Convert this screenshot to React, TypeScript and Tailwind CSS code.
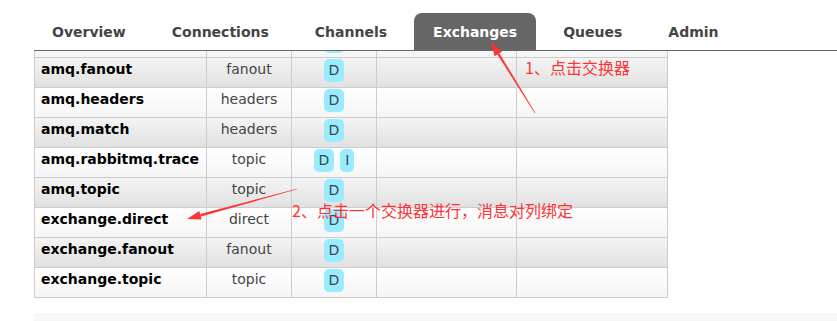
import React from "react";

const tabs = ["Overview", "Connections", "Channels", "Exchanges", "Queues", "Admin"];

const rows = [
  { name: "amq.fanout", type: "fanout", feats: ["D"] },
  { name: "amq.headers", type: "headers", feats: ["D"] },
  { name: "amq.match", type: "headers", feats: ["D"] },
  { name: "amq.rabbitmq.trace", type: "topic", feats: ["D", "I"] },
  { name: "amq.topic", type: "topic", feats: ["D"] },
  { name: "exchange.direct", type: "direct", feats: ["D"] },
  { name: "exchange.fanout", type: "fanout", feats: ["D"] },
  { name: "exchange.topic", type: "topic", feats: ["D"] },
];

function Badge({ label }: { label: string }) {
  return (
    <span className="inline-block h-[23px] px-[5px] pt-[3px] rounded-[5px] bg-[#99ebff] text-[14px] leading-[17px] text-[#444]">
      {label}
    </span>
  );
}

function Row({ name, type, feats, odd }: { name: string; type: string; feats: string[]; odd: boolean }) {
  const bg = odd
    ? "bg-linear-to-b from-[#f4f4f4] to-[#e1e1e1]"
    : "bg-linear-to-b from-white to-[#f5f5f5]";
  return (
    <div className={`grid grid-cols-[172px_85px_85px_140px_151px] h-[30px] border-b border-[#ccc] ${bg}`}>
      <div className="border-r border-[#ccc] pl-[6px] pt-[3px] font-bold text-[14px] leading-[17px] text-black">
        {name}
      </div>
      <div className="border-r border-[#ccc] pt-[3px] text-center text-[14px] leading-[17px] text-[#444]">
        {type}
      </div>
      <div className="border-r border-[#ccc] pt-[1px] flex justify-center items-start gap-[6px]">
        {feats.map((f) => (
          <Badge key={f} label={f} />
        ))}
      </div>
      <div className="border-r border-[#ccc]" />
      <div className="border-r border-[#ccc]" />
    </div>
  );
}

export default function App() {
  return (
    <div className="relative w-[837px] h-[321px] overflow-hidden bg-white font-['DejaVu_Sans',sans-serif]">
      {/* tab bar */}
      <div className="flex items-end gap-[8px] pl-[33px] pt-[13px]">
        {tabs.map((t) => (
          <div
            key={t}
            className={`h-[37px] px-[19px] pt-[2px] flex items-center font-bold text-[14px] ${
              t === "Exchanges" ? "bg-[#666] text-white rounded-t-[8px]" : "text-[#444]"
            }`}
          >
            {t}
          </div>
        ))}
      </div>
      <div className="ml-[34px] border-t border-[#666]" />

      {/* exchanges table */}
      <div className="ml-[34px] w-[634px] border-l border-[#ccc]">
        <div className="h-[7px] overflow-hidden border-b border-[#ccc] flex flex-col justify-end">
          <div className="grid grid-cols-[172px_85px_85px_140px_151px] h-[30px] shrink-0 bg-linear-to-b from-white to-[#f5f5f5]">
            <div className="border-r border-[#ccc]" />
            <div className="border-r border-[#ccc]" />
            <div className="border-r border-[#ccc] pt-[3px] flex justify-center">
              <Badge label="D" />
            </div>
            <div className="border-r border-[#ccc]" />
            <div className="border-r border-[#ccc]" />
          </div>
        </div>
        {rows.map((r, i) => (
          <Row key={r.name} {...r} odd={i % 2 === 0} />
        ))}
      </div>

      <div className="ml-[34px] mt-[15px] h-[20px] bg-[#f7f7f7]" />

      {/* annotations */}
      <svg className="absolute inset-0 pointer-events-none" width="837" height="321">
        <polygon points="535.26,112.84 534.74,113.16 497.4,54.53 499.4,53.27" fill="#f33" />
        <polygon points="491,42 502.2,51.5 494.6,56.3" fill="#f33" />
        <polygon points="297.08,189.29 296.92,188.71 200.2,214.1 200.8,216.5" fill="#f33" />
        <polygon points="187,219 201.7,219.6 199.3,211.0" fill="#f33" />
      </svg>
      <div className="absolute left-[525px] top-[57px] text-[16px] leading-[20px] text-[#f33] font-['Noto_Sans_CJK_SC',sans-serif] whitespace-nowrap">
        1、点击交换器
      </div>
      <div className="absolute left-[292px] top-[200px] text-[16px] leading-[20px] text-[#f33] font-['Noto_Sans_CJK_SC',sans-serif] whitespace-nowrap">
        2、点击一个交换器进行，消息对列绑定
      </div>
    </div>
  );
}
